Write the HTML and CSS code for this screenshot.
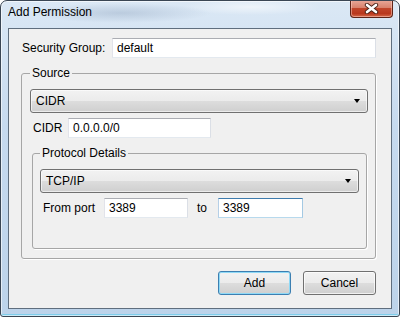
FILE: index.html
```html
<!DOCTYPE html>
<html lang="en">
<head>
  <meta charset="UTF-8">
  <title>Add Permission</title>
  <link rel="stylesheet" href="styles.css">
</head>
<body>
  <div class="window">
    <div class="titlebar">
      <span class="title">Add Permission</span>
      <button class="close" title="Close">
        <svg width="15" height="11" viewBox="0 0 15 11">
          <path d="M3 2 L12 9 M12 2 L3 9" stroke="#4a2318" stroke-width="4.4" stroke-linecap="round"/>
          <path d="M3 2 L12 9 M12 2 L3 9" stroke="#ffffff" stroke-width="2.6" stroke-linecap="round"/>
        </svg>
      </button>
    </div>

    <div class="client">
      <div class="row row-group">
        <label class="lbl lbl-group">Security Group:</label>
        <input type="text" class="field field-group" value="default">
      </div>

      <fieldset class="group group-source">
        <legend>Source</legend>
        <div class="combo">CIDR<span class="arrow"></span></div>
        <div class="row row-cidr">
          <label class="lbl lbl-cidr">CIDR</label>
          <input type="text" class="field field-cidr" value="0.0.0.0/0">
        </div>

        <fieldset class="group group-protocol">
          <legend>Protocol Details</legend>
          <div class="combo">TCP/IP<span class="arrow"></span></div>
          <div class="row row-ports">
            <label class="lbl lbl-from">From port</label>
            <input type="text" class="field field-port" value="3389">
            <label class="lbl lbl-to">to</label>
            <input type="text" class="field field-port field-focus" value="3389">
          </div>
        </fieldset>
      </fieldset>

      <div class="actions">
        <button class="btn btn-default">Add</button>
        <button class="btn">Cancel</button>
      </div>
    </div>
  </div>
</body>
</html>
```

FILE: styles.css
```css
body {
  margin: 0;
  font-family: "Liberation Sans", Arial, sans-serif;
  font-size: 12px;
  color: #000;
  background: #fff;
}

.window {
  box-sizing: border-box;
  width: 400px;
  height: 317px;
  display: flex;
  flex-direction: column;
  border: 1px solid #3a4654;
  border-radius: 7px 7px 3px 3px;
  background:
    radial-gradient(ellipse 90px 10px at 120px 12px, rgba(150,170,195,0.45), transparent),
    radial-gradient(ellipse 70px 8px at 250px 6px, rgba(255,255,255,0.55), transparent),
    linear-gradient(to bottom, #dbe8f5 0%, #c6daef 40%, #bcd3ea 100%);
  box-shadow: inset 0 0 0 1px rgba(255,255,255,0.6), inset 0 -2px 0 #7fcdeb;
  overflow: hidden;
}

.titlebar {
  height: 27px;
  flex: none;
  display: flex;
  align-items: flex-start;
  padding-left: 7px;
}

.title {
  padding-top: 4px;
  line-height: 15px;
}

.close {
  margin-left: auto;
  margin-right: 6px;
  margin-top: -1px;
  width: 43px;
  height: 18px;
  padding: 0;
  display: flex;
  align-items: center;
  justify-content: center;
  border: 1px solid #5e2418;
  border-top: none;
  border-radius: 0 0 4px 4px;
  background: linear-gradient(to bottom, #e9a99a 0%, #d8826d 45%, #c0452a 50%, #b9381e 80%, #d66a4a 100%);
  box-shadow: inset 0 0 0 1px rgba(255,210,200,0.5);
}

.client {
  box-sizing: border-box;
  height: 281px;
  margin: 0 7px;
  border: 1px solid #5f6e7e;
  background: #f0f0f0;
  padding: 9px 15px 0 12px;
}

.row {
  display: flex;
  align-items: center;
}

.lbl {
  line-height: 15px;
  box-sizing: border-box;
  flex: none;
}

.lbl-group { width: 91px; padding-left: 1px; }
.lbl-cidr { width: 38px; padding-left: 3px; }
.lbl-from { width: 64px; padding-left: 3px; }
.lbl-to { width: 30px; padding-left: 9px; }

.field {
  box-sizing: border-box;
  height: 20px;
  padding: 0 4px;
  margin: 0;
  font: inherit;
  color: #000;
  background: #fff;
  border: 1px solid;
  border-color: #abadb3 #dbdfe6 #e3e9ef #e2e3ea;
  outline: none;
}

.field-group { flex: 1; min-width: 0; }
.field-cidr { width: 143px; }
.field-port { width: 84px; }
.field-focus {
  width: 85px;
  border-color: #3d7bad #a4c9e3 #b7d9ed #b5cfe7;
}

.group {
  margin: 0;
  border: 1px solid #a6a6a6;
  border-radius: 3px;
  box-shadow: 1px 1px 0 #fff;
  min-width: 0;
}

.group legend {
  padding: 0 2px;
  line-height: 15px;
}

.group-source {
  margin: 8px 0 0 0;
  padding: 8px 7px 9px 8px;
}

.group-protocol {
  margin: 8px 1px 0 2px;
  padding: 8px 7px 30px 7px;
}

.combo {
  box-sizing: border-box;
  height: 24px;
  display: flex;
  align-items: center;
  justify-content: space-between;
  padding: 0 7px 0 5px;
  border: 1px solid #707070;
  border-radius: 3px;
  background: linear-gradient(to bottom, #f2f2f2 0%, #ebebeb 50%, #dddddd 50%, #cfcfcf 100%);
  box-shadow: inset 0 0 0 1px rgba(255,255,255,0.6);
}

.arrow {
  width: 0;
  height: 0;
  border-left: 3.5px solid transparent;
  border-right: 3.5px solid transparent;
  border-top: 4px solid #000;
}

.row-cidr,
.row-ports {
  margin-top: 5px;
}

.actions {
  display: flex;
  justify-content: flex-end;
  gap: 12px;
  margin-top: 12px;
}

.btn {
  box-sizing: border-box;
  width: 73px;
  height: 24px;
  padding: 0;
  font: inherit;
  color: #000;
  border: 1px solid #707070;
  border-radius: 3px;
  background: linear-gradient(to bottom, #f2f2f2 0%, #ebebeb 50%, #dddddd 50%, #cfcfcf 100%);
  box-shadow: inset 0 0 0 1px rgba(255,255,255,0.7);
}

.btn-default {
  border-color: #3c7fb1;
  box-shadow: inset 0 0 0 1px #8fd9f6;
}
```
